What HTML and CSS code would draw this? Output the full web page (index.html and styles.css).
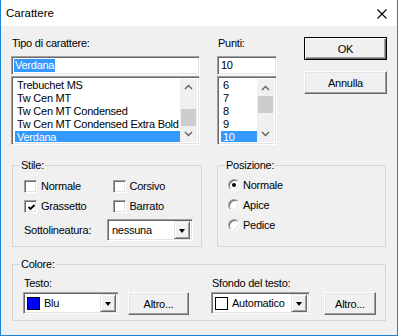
FILE: index.html
```html
<!DOCTYPE html>
<html lang="it">
<head>
    <meta charset="UTF-8">
    <title>Carattere</title>
    <link rel="stylesheet" href="styles.css">
</head>
<body>
    <div class="window">
        <div class="titlebar">
            <span class="title">Carattere</span>
            <svg class="close" width="10" height="10" viewBox="0 0 10 10">
                <path d="M0.5 0.5 L9.5 9.5 M9.5 0.5 L0.5 9.5" stroke="#000" stroke-width="1.1" fill="none"/>
            </svg>
        </div>

        <div class="dialog">
            <div class="top-row">
                <div class="font-col">
                    <div class="label">Tipo di carattere:</div>
                    <div class="field sunken"><span class="sel-text">Verdana</span></div>
                    <div class="listbox sunken">
                        <ul class="items">
                            <li>Trebuchet MS</li>
                            <li>Tw Cen MT</li>
                            <li>Tw Cen MT Condensed</li>
                            <li>Tw Cen MT Condensed Extra Bold</li>
                            <li class="selected">Verdana</li>
                        </ul>
                        <div class="scrollbar">
                            <div class="sb-btn">
                                <svg width="9" height="6" viewBox="0 0 9 6"><path d="M1 5 L4.5 1.5 L8 5" stroke="#606060" stroke-width="1.4" fill="none"/></svg>
                            </div>
                            <div class="sb-track"><div class="sb-thumb thumb-font"></div></div>
                            <div class="sb-btn">
                                <svg width="9" height="6" viewBox="0 0 9 6"><path d="M1 1 L4.5 4.5 L8 1" stroke="#606060" stroke-width="1.4" fill="none"/></svg>
                            </div>
                        </div>
                    </div>
                </div>

                <div class="size-col">
                    <div class="label">Punti:</div>
                    <div class="field sunken"><span class="plain-text">10</span></div>
                    <div class="listbox sunken">
                        <ul class="items">
                            <li>6</li>
                            <li>7</li>
                            <li>8</li>
                            <li>9</li>
                            <li class="selected">10</li>
                        </ul>
                        <div class="scrollbar">
                            <div class="sb-btn">
                                <svg width="9" height="6" viewBox="0 0 9 6"><path d="M1 5 L4.5 1.5 L8 5" stroke="#606060" stroke-width="1.4" fill="none"/></svg>
                            </div>
                            <div class="sb-track"><div class="sb-thumb thumb-size"></div></div>
                            <div class="sb-btn">
                                <svg width="9" height="6" viewBox="0 0 9 6"><path d="M1 1 L4.5 4.5 L8 1" stroke="#606060" stroke-width="1.4" fill="none"/></svg>
                            </div>
                        </div>
                    </div>
                </div>

                <div class="button-col">
                    <button class="btn btn-default">OK</button>
                    <button class="btn">Annulla</button>
                </div>
            </div>

            <div class="groups">
                <fieldset class="group group-stile">
                    <legend>Stile:</legend>
                    <div class="stile-body">
                        <div class="check-row">
                            <div class="check-item"><span class="checkbox sunken"></span>Normale</div>
                            <div class="check-item"><span class="checkbox sunken"></span>Corsivo</div>
                        </div>
                        <div class="check-row">
                            <div class="check-item">
                                <span class="checkbox sunken">
                                    <svg width="9" height="9" viewBox="0 0 9 9"><path d="M1.5 4 L3.5 6 L7.5 2" stroke="#000" stroke-width="1.8" fill="none"/></svg>
                                </span>Grassetto
                            </div>
                            <div class="check-item"><span class="checkbox sunken"></span>Barrato</div>
                        </div>
                        <div class="underline-row">
                            <span class="underline-label">Sottolineatura:</span>
                            <div class="combo combo-underline sunken">
                                <span class="combo-text">nessuna</span>
                                <span class="combo-arrow"><span class="triangle"></span></span>
                            </div>
                        </div>
                    </div>
                </fieldset>

                <fieldset class="group group-posizione">
                    <legend>Posizione:</legend>
                    <div class="posizione-body">
                        <div class="radio-row"><span class="radio checked"></span>Normale</div>
                        <div class="radio-row"><span class="radio"></span>Apice</div>
                        <div class="radio-row"><span class="radio"></span>Pedice</div>
                    </div>
                </fieldset>
            </div>

            <fieldset class="group group-colore">
                <legend>Colore:</legend>
                <div class="colore-body">
                    <div class="color-col color-text">
                        <div class="label">Testo:</div>
                        <div class="color-row">
                            <div class="combo combo-text-color sunken">
                                <span class="swatch swatch-blue"></span>
                                <span class="combo-text">Blu</span>
                                <span class="combo-arrow"><span class="triangle"></span></span>
                            </div>
                            <button class="btn btn-altro">Altro...</button>
                        </div>
                    </div>
                    <div class="color-col color-bg">
                        <div class="label">Sfondo del testo:</div>
                        <div class="color-row">
                            <div class="combo combo-bg-color sunken">
                                <span class="swatch swatch-white"></span>
                                <span class="combo-text">Automatico</span>
                                <span class="combo-arrow"><span class="triangle"></span></span>
                            </div>
                            <button class="btn btn-altro btn-altro-small">Altro...</button>
                        </div>
                    </div>
                </div>
            </fieldset>
        </div>
    </div>
</body>
</html>
```

FILE: styles.css
```css
* {
    margin: 0;
    padding: 0;
    box-sizing: border-box;
}

body {
    font-family: "Liberation Sans", Arial, sans-serif;
    font-size: 11px;
    letter-spacing: -0.25px;
    color: #000;
    background-color: #f0f0f0;
}

.window {
    width: 398px;
    height: 336px;
    display: flex;
    flex-direction: column;
    border: solid #1883d7;
    border-width: 0 1px 1px 1px;
    background-color: #f0f0f0;
}

/* Title bar */
.titlebar {
    height: 26px;
    display: flex;
    align-items: center;
    justify-content: space-between;
    padding: 0 10px 0 5px;
    background-color: #fff;
}

.title {
    font-size: 11.5px;
    letter-spacing: 0;
}

.close {
    display: block;
    margin-top: 2px;
}

/* Dialog body */
.dialog {
    flex: 1;
    padding: 11px 10px 0 10px;
}

.label {
    height: 13px;
    line-height: 13px;
    padding-left: 1px;
    white-space: nowrap;
}

/* Sunken 3D border shared by inputs, lists and boxes */
.sunken {
    background-color: #fff;
    border: 1px solid;
    border-color: #a0a0a0 #fff #fff #a0a0a0;
    box-shadow: inset 1px 1px #696969, inset -1px -1px #e3e3e3;
}

.top-row {
    display: flex;
}

.font-col {
    width: 189px;
}

.size-col {
    width: 60px;
    margin-left: 17px;
}

.button-col {
    width: 83px;
    margin-left: 27px;
    display: flex;
    flex-direction: column;
}

.font-col .label,
.size-col .label {
    margin-bottom: 6px;
}

.field {
    height: 19px;
    padding: 2px 2px;
    line-height: 13px;
    white-space: nowrap;
}

.sel-text {
    display: inline-block;
    padding: 0 1px;
    background-color: #3399ff;
    color: #fff;
}

.plain-text {
    display: inline-block;
    padding-left: 1px;
}

.listbox {
    height: 69px;
    margin-top: 1px;
    display: flex;
    padding: 2px;
}

.items {
    flex: 1;
    list-style: none;
    padding-left: 1px;
    overflow: hidden;
}

.items li {
    height: 13px;
    line-height: 13px;
    padding-left: 2px;
    white-space: nowrap;
    overflow: hidden;
}

.items li.selected {
    background-color: #3399ff;
    color: #fff;
}

.scrollbar {
    width: 17px;
    display: flex;
    flex-direction: column;
    background-color: #f0f0f0;
}

.sb-btn {
    height: 17px;
    display: flex;
    align-items: center;
    justify-content: center;
}

.sb-btn svg {
    display: block;
}

.sb-track {
    flex: 1;
    padding: 0 1px;
}

.sb-thumb {
    height: 17px;
    background-color: #cdcdcd;
}

.thumb-font {
    margin-top: 13px;
}

.thumb-size {
    margin-top: 0;
}

/* Buttons */
.btn {
    font-family: inherit;
    font-size: 11px;
    letter-spacing: -0.25px;
    color: #000;
    height: 23px;
    background-color: #f0f0f0;
    border: 1px solid;
    border-color: #fff #696969 #696969 #fff;
    box-shadow: inset -1px -1px #a0a0a0, inset 1px 1px #e3e3e3;
}

.button-col .btn {
    width: 83px;
    margin-bottom: 11px;
}

.btn-default {
    border: 1px solid #000;
    box-shadow: inset 1px 1px #fff, inset -1px -1px #696969, inset -2px -2px #a0a0a0;
}

/* Group boxes */
.groups {
    display: flex;
    margin: 14px 0 0 1px;
}

.group {
    border: 1px solid #d5d5d5;
    min-width: 0;
}

.group legend {
    margin-left: 7px;
    padding: 0 1px;
    height: 13px;
    line-height: 13px;
}

.group-stile {
    width: 190px;
}

.group-posizione {
    width: 169px;
    margin-left: 15px;
}

.stile-body {
    padding: 4px 0 5px 11px;
}

.check-row {
    height: 20px;
    display: flex;
    align-items: center;
}

.check-item {
    width: 90px;
    display: flex;
    align-items: center;
}

.checkbox {
    width: 13px;
    height: 13px;
    margin-right: 4px;
    padding: 2px;
    display: block;
}

.checkbox svg {
    display: block;
}

.underline-row {
    margin-top: 3px;
    display: flex;
    align-items: center;
}

.underline-label {
    width: 83px;
}

.combo {
    height: 22px;
    display: flex;
    align-items: center;
    padding: 2px;
}

.combo-text {
    flex: 1;
    padding-left: 2px;
    white-space: nowrap;
}

.combo-underline {
    width: 86px;
}

.combo-arrow {
    width: 16px;
    height: 18px;
    display: flex;
    align-items: center;
    justify-content: center;
    background-color: #f0f0f0;
    border: 1px solid;
    border-color: #e3e3e3 #696969 #696969 #e3e3e3;
    box-shadow: inset 1px 1px #fff, inset -1px -1px #a0a0a0;
}

.triangle {
    width: 0;
    height: 0;
    border-left: 3.5px solid transparent;
    border-right: 3.5px solid transparent;
    border-top: 4px solid #000;
    margin-top: 1px;
}

.posizione-body {
    padding: 3px 0 0 10px;
}

.radio-row {
    height: 20px;
    display: flex;
    align-items: center;
}

.radio {
    width: 12px;
    height: 12px;
    margin-right: 3px;
    border-radius: 50%;
    background-color: #fff;
    border: 1px solid;
    border-color: #a0a0a0 #fff #fff #a0a0a0;
    box-shadow: inset 1px 1px #696969, inset -1px -1px #e3e3e3;
    display: flex;
    align-items: center;
    justify-content: center;
}

.radio.checked::after {
    content: "";
    width: 4px;
    height: 4px;
    border-radius: 50%;
    background-color: #000;
}

/* Colore group */
.group-colore {
    width: 374px;
    margin: 11px 0 0 1px;
}

.colore-body {
    display: flex;
    padding: 6px 0 5px 10px;
}

.colore-body .label {
    margin-bottom: 2px;
}

.color-bg {
    margin-left: 22px;
}

.color-row {
    display: flex;
    align-items: flex-start;
}

.combo-text-color {
    width: 96px;
}

.combo-bg-color {
    width: 99px;
}

.swatch {
    width: 13px;
    height: 13px;
    margin-left: 1px;
    border: 1px solid #000;
}

.swatch-blue {
    background-color: #0000ff;
}

.swatch-white {
    background-color: #fff;
}

.combo .swatch + .combo-text {
    padding-left: 4px;
}

.btn-altro {
    width: 61px;
    margin-left: 9px;
}

.btn-altro-small {
    width: 52px;
    margin-left: 14px;
}
```
